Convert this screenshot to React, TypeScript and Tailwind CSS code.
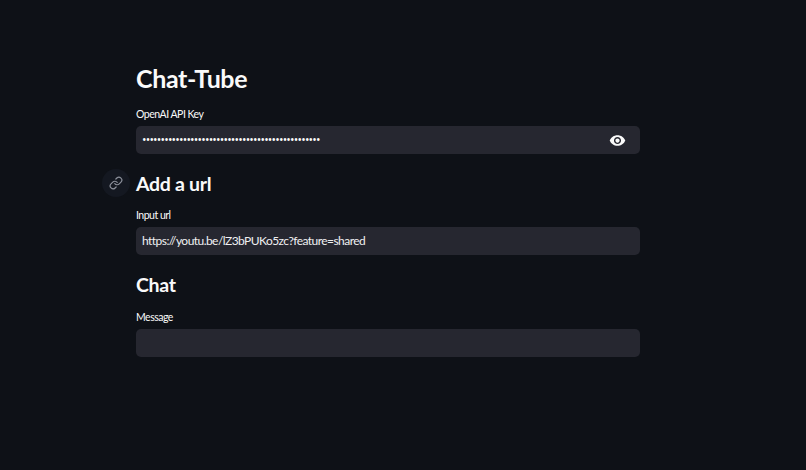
import type { ReactNode } from "react";

function Field({ label, value, top, mono, children }: { label: string; value?: string; top: string; mono?: boolean; children?: ReactNode }) {
  return (
    <div className={top}>
      <div className="h-[14px] text-[10.5px] leading-[14px] tracking-[-0.5px] text-[#fafafa]">{label}</div>
      <div className="mt-[5px] flex h-[28px] items-center justify-between rounded-[5px] bg-[#262730] pl-[6px] pr-[14px]">
        <span className={mono ? "font-['Open_Sans'] text-[12px] leading-none tracking-[-0.81px] text-[#fafafa]" : "text-[12px] leading-none tracking-[-0.55px] text-[#f0f0f2]"}>{value}</span>
        {children}
      </div>
    </div>
  );
}

export default function App() {
  return (
    <div className="h-[470px] w-[806px] overflow-hidden bg-[#0e1117] font-['Lato','Noto_Sans',sans-serif]">
      <div className="ml-[136px] w-[504px] pt-[62px]">
        <h1 className="h-[34px] text-[25px] font-bold leading-[32px] tracking-[-0.38px] text-[#fafafa]">Chat-Tube</h1>
        <Field label="OpenAI API Key" top="mt-[11px]" mono value={"•".repeat(48)}>
          <svg viewBox="0 0 24 24" className="h-[17px] w-[17px]" fill="#fafafa">
            <path d="M12 4.5C7 4.5 2.73 7.61 1 12c1.73 4.39 6 7.5 11 7.5s9.27-3.11 11-7.5c-1.73-4.39-6-7.5-11-7.5zM12 17c-2.76 0-5-2.24-5-5s2.24-5 5-5 5 2.24 5 5-2.24 5-5 5zm0-8c-1.66 0-3 1.34-3 3s1.34 3 3 3 3-1.34 3-3-1.34-3-3-3z" />
          </svg>
        </Field>
        <div className="relative mt-[15px]">
          <div className="absolute left-[-34px] top-0 flex h-[28px] w-[28px] items-center justify-center rounded-full bg-[#141821]">
            <svg viewBox="0 0 24 24" className="h-[14px] w-[14px]" fill="none" stroke="#8d919c" strokeWidth="2" strokeLinecap="round" strokeLinejoin="round">
              <path d="M10 13a5 5 0 0 0 7.54.54l3-3a5 5 0 0 0-7.07-7.07l-1.72 1.71" />
              <path d="M14 11a5 5 0 0 0-7.54-.54l-3 3a5 5 0 0 0 7.07 7.07l1.71-1.71" />
            </svg>
          </div>
          <h2 className="h-[28px] text-[19.5px] font-bold leading-[30px] tracking-[-0.3px] text-[#fafafa]">Add a url</h2>
        </div>
        <Field label="Input url" top="mt-[11px]" value="https://youtu.be/lZ3bPUKo5zc?feature=shared" />
        <h2 className="mt-[16px] h-[28px] text-[19.5px] font-bold leading-[28px] tracking-[-0.3px] text-[#fafafa]">Chat</h2>
        <Field label="Message" top="mt-[11px]" value="" />
      </div>
    </div>
  );
}
